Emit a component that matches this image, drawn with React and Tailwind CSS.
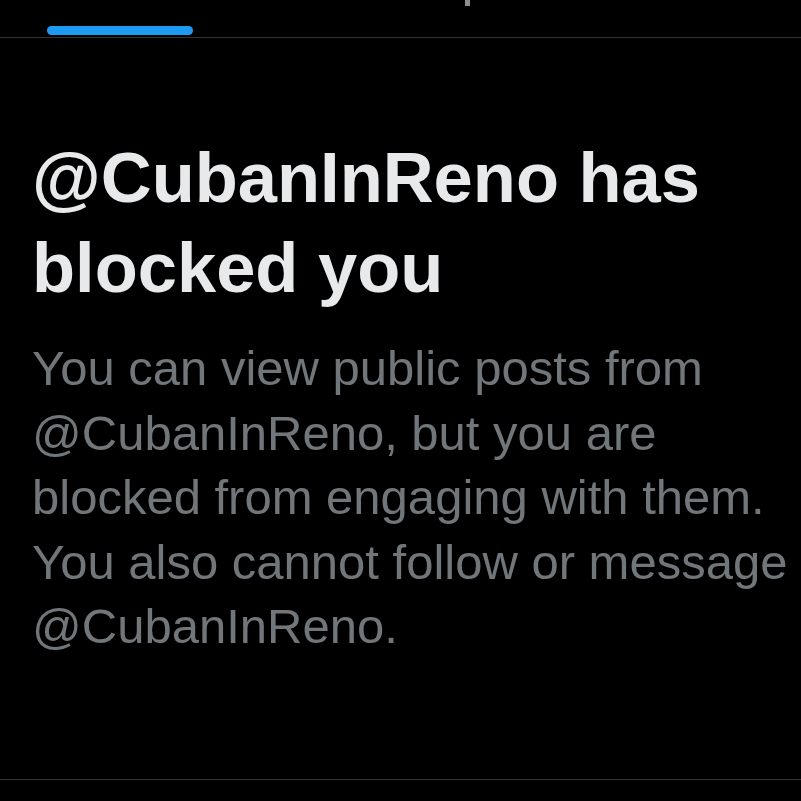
export default function App() {
  return (
    <div
      className="w-[801px] h-[801px] bg-black overflow-hidden flex flex-col"
      style={{ fontFamily: '"Liberation Sans", Arial, sans-serif' }}
    >
      <div className="relative h-[38px] border-b border-[#2f3336] shrink-0">
        <div className="absolute left-[465px] top-0 w-[5px] h-[6px] bg-[#8b8f94]" />
        <div className="absolute left-[47px] top-[26px] w-[146px] h-[9px] rounded-full bg-[#1d9bf0]" />
      </div>
      <div className="flex-1 px-[32px] pt-[95px]">
        <h1 className="text-[70.5px] leading-[90px] font-bold text-[#e7e9ea]">
          @CubanInReno has
          <br />
          blocked you
        </h1>
        <p className="mt-[23px] text-[49px] leading-[64.5px] text-[#71767b] whitespace-nowrap">
          You can view public posts from
          <br />
          @CubanInReno, but you are
          <br />
          blocked from engaging with them.
          <br />
          You also cannot follow or message
          <br />
          @CubanInReno.
        </p>
      </div>
      <div className="h-[22px] border-t border-[#2f3336] shrink-0" />
    </div>
  );
}
